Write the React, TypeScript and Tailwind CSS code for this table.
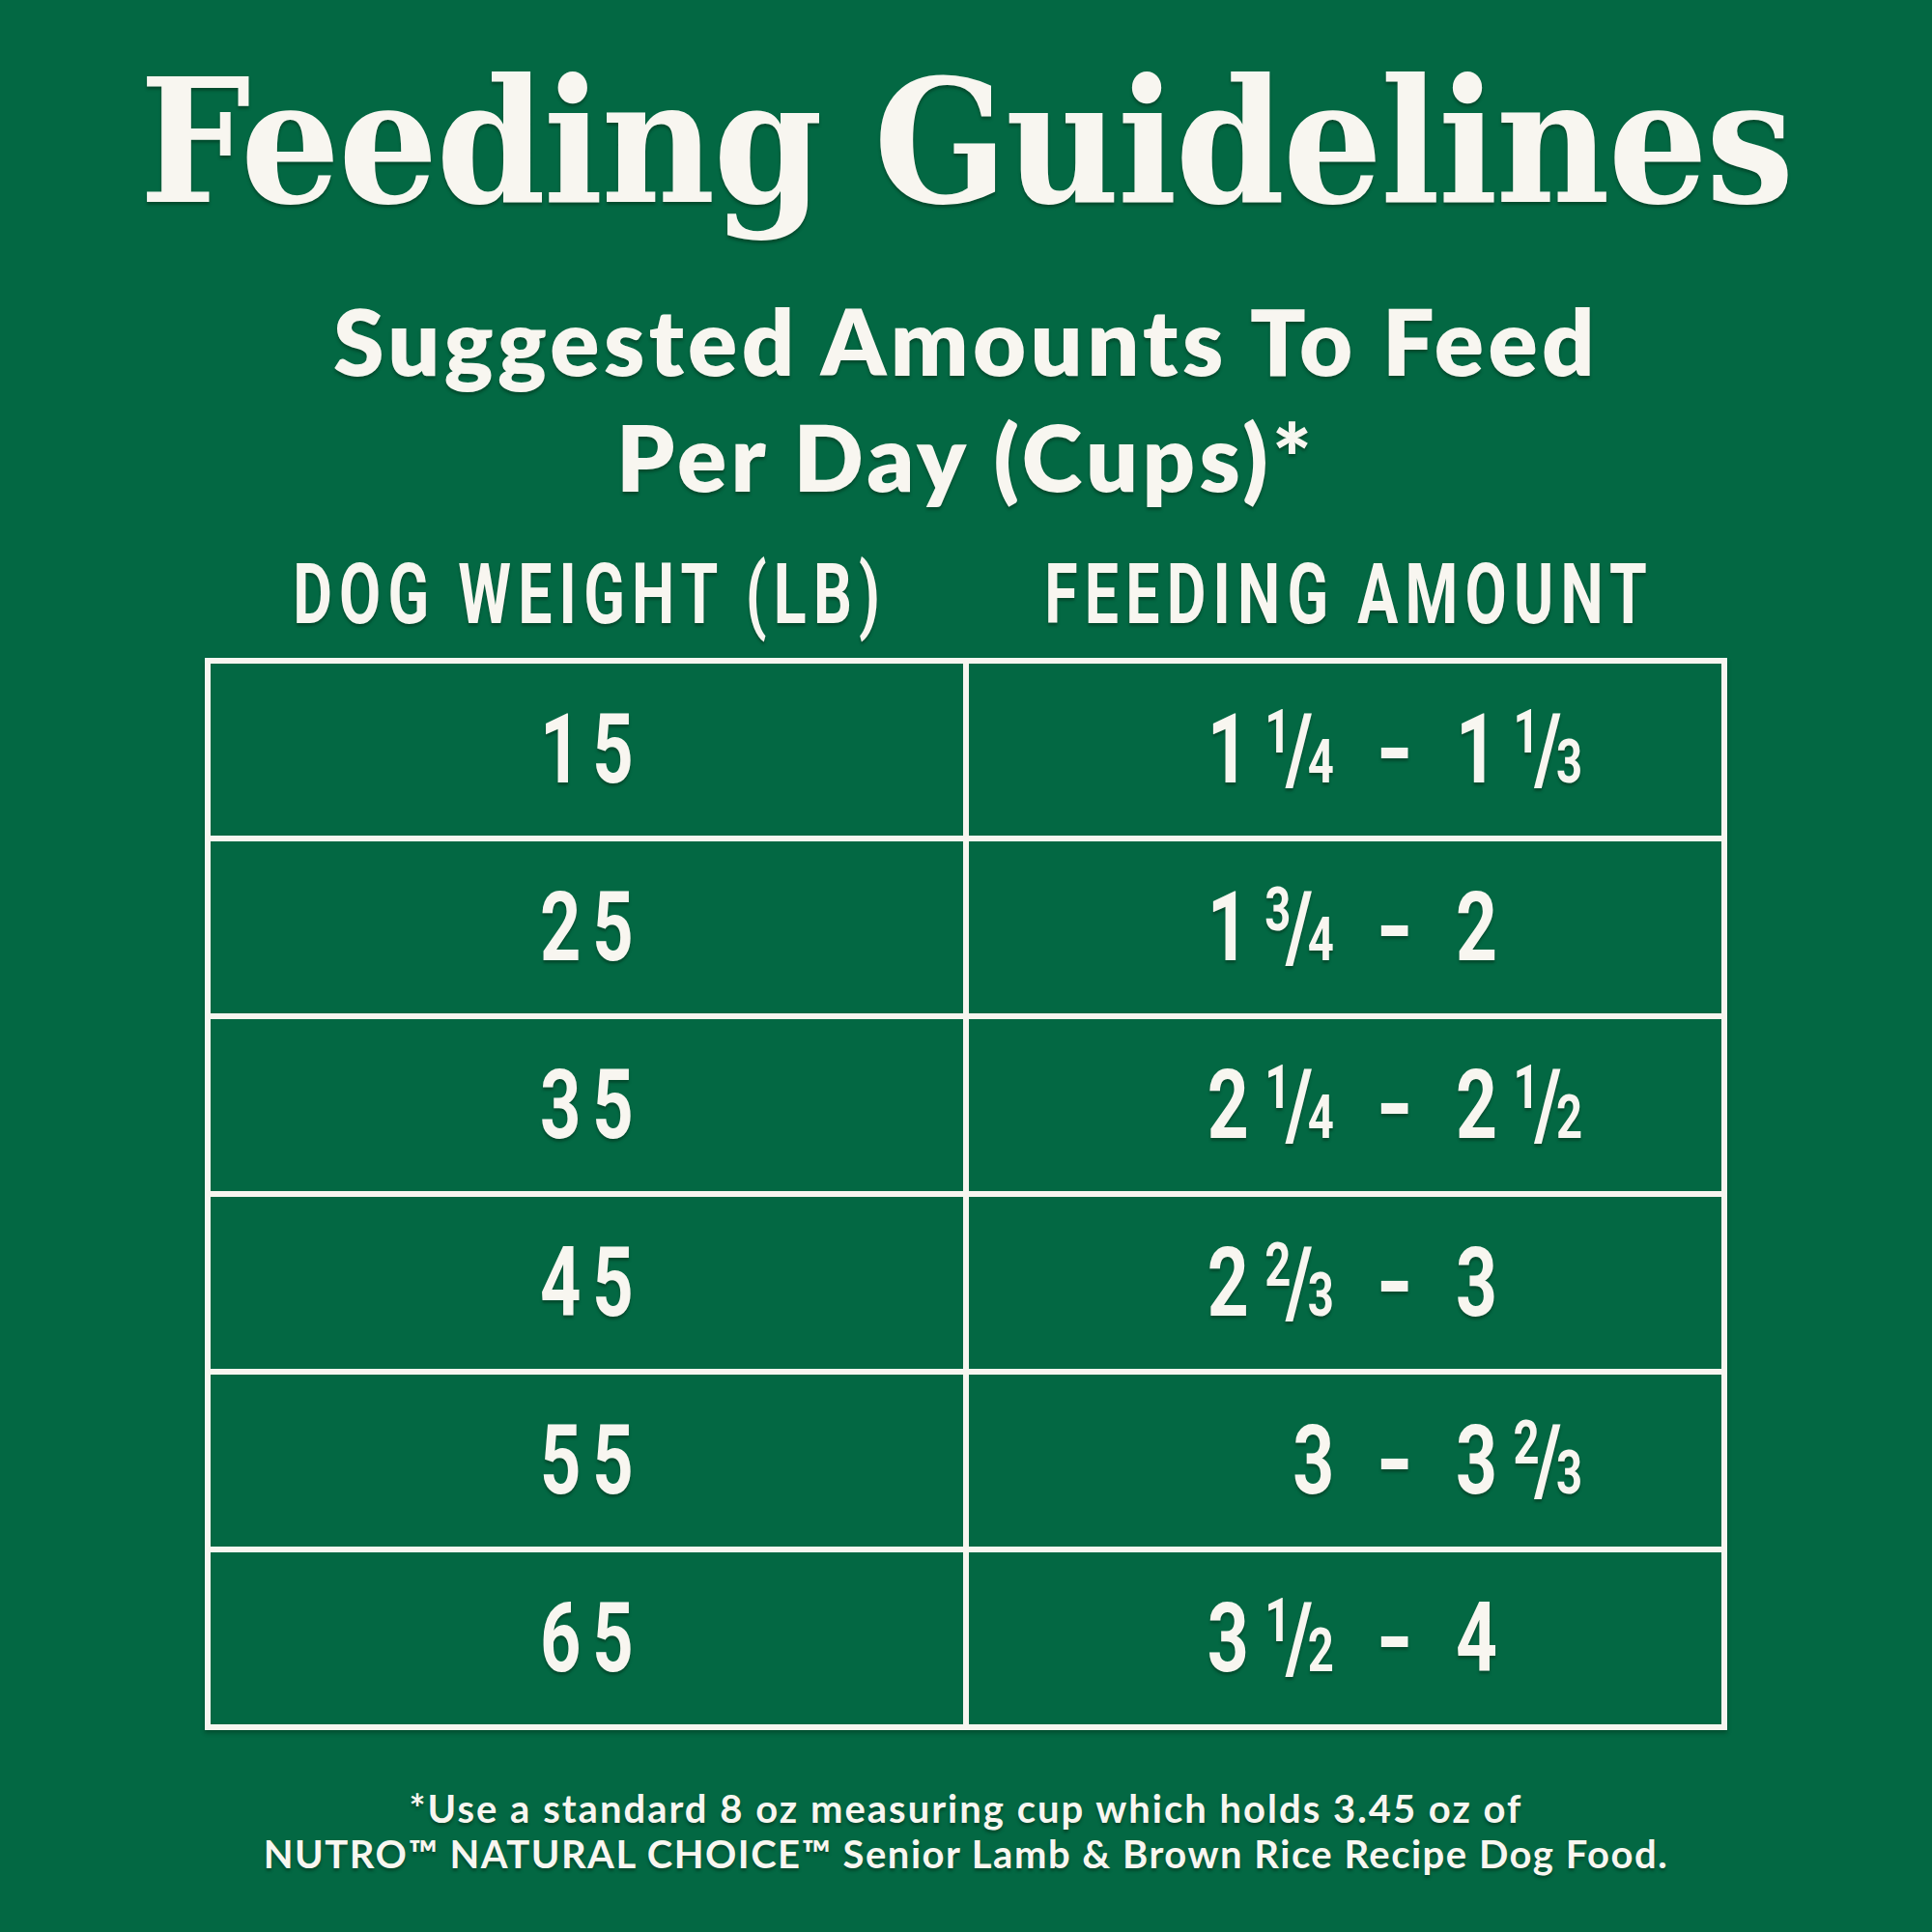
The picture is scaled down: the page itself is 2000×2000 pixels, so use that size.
import React from "react";

type Part = { w: string; n?: string; d?: string };
type Row = { lb: string; a: Part; b: Part };

const ROWS: Row[] = [
  { lb: "15", a: { w: "1", n: "1", d: "4" }, b: { w: "1", n: "1", d: "3" } },
  { lb: "25", a: { w: "1", n: "3", d: "4" }, b: { w: "2" } },
  { lb: "35", a: { w: "2", n: "1", d: "4" }, b: { w: "2", n: "1", d: "2" } },
  { lb: "45", a: { w: "2", n: "2", d: "3" }, b: { w: "3" } },
  { lb: "55", a: { w: "3" }, b: { w: "3", n: "2", d: "3" } },
  { lb: "65", a: { w: "3", n: "1", d: "2" }, b: { w: "4" } },
];

const shadow = "[text-shadow:0_3px_3px_rgba(0,40,20,0.45)]";

function Amount({ p }: { p: Part }) {
  return (
    <>
      <span>{p.w}</span>
      {p.n && (
        <span className="ml-[22px]">
          <span className="text-[63px] leading-none align-top tracking-[-7px]">{p.n}</span>
          <span className="tracking-[-7px]">/</span>
          <span className="text-[63px]">{p.d}</span>
        </span>
      )}
    </>
  );
}

export default function App() {
  const num = `font-['Roboto',sans-serif] font-bold text-[100px] leading-none text-[#f8f6f0] ${shadow}`;
  return (
    <div className="w-[2000px] h-[2000px] bg-[#036843] flex flex-col items-center text-[#f8f6f0]">
      <h1
        className={`mt-[58px] font-['DejaVu_Serif',serif] font-bold text-[178px] leading-none tracking-[-2px] scale-x-[0.91] whitespace-nowrap ${shadow}`}
      >
        Feeding Guidelines
      </h1>
      <div
        className={`mt-[56px] font-['Lato',sans-serif] font-extrabold text-[95px] tracking-[4.4px] leading-[120px] text-center ${shadow}`}
      >
        <div>Suggested Amounts To Feed</div>
        <div>Per Day (Cups)*</div>
      </div>

      <div className="w-[1576px] mt-[40px] grid grid-cols-2 gap-[6px] px-[6px]">
        {["DOG WEIGHT (LB)", "FEEDING AMOUNT"].map((t) => (
          <div key={t} className="flex justify-center">
            <span
              className={`inline-block font-['Roboto',sans-serif] font-bold text-[87px] leading-none tracking-[10px] pl-[10px] scale-x-[0.72] whitespace-nowrap ${shadow}`}
            >
              {t}
            </span>
          </div>
        ))}
      </div>

      <div className="mt-[22px] w-[1576px] bg-[#f8f6f0] p-[6px] grid grid-cols-2 gap-[6px] shadow-[0_3px_4px_rgba(0,40,20,0.4)]">
        {ROWS.map((r) => (
          <React.Fragment key={r.lb}>
            <div className="h-[178px] bg-[#036843] flex items-center justify-center">
              <span className={`inline-block scale-x-[0.74] tracking-[16px] pl-[16px] ${num}`}>{r.lb}</span>
            </div>
            <div className="h-[178px] bg-[#036843] flex items-center">
              <div className="w-[378px] flex justify-end">
                <span className={`inline-block origin-right scale-x-[0.75] whitespace-nowrap ${num}`}>
                  <Amount p={r.a} />
                </span>
              </div>
              <div className="w-[126px] flex justify-center">
                <span className={num}>-</span>
              </div>
              <div className="flex-1 flex justify-start">
                <span className={`inline-block origin-left scale-x-[0.75] whitespace-nowrap ${num}`}>
                  <Amount p={r.b} />
                </span>
              </div>
            </div>
          </React.Fragment>
        ))}
      </div>

      <div
        className={`mt-[58px] font-['Lato',sans-serif] font-bold text-[40px] leading-[47px] text-center ${shadow}`}
      >
        <div className="tracking-[2px]">*Use a standard 8 oz measuring cup which holds 3.45 oz of</div>
        <div className="tracking-[1.5px]">NUTRO™ NATURAL CHOICE™ Senior Lamb &amp; Brown Rice Recipe Dog Food.</div>
      </div>
    </div>
  );
}
